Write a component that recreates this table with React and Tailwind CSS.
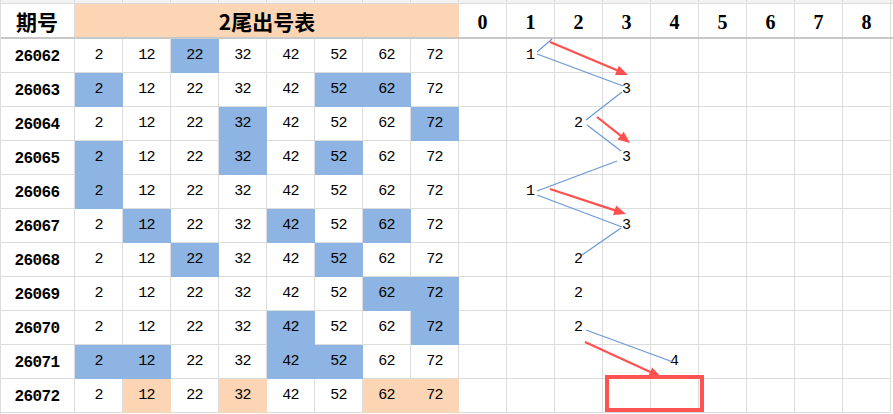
import React from "react";

const nums = [2, 12, 22, 32, 42, 52, 62, 72];

// period, highlighted indexes, count, fill
const rows = [
  { id: "26062", hit: [2], n: 1 },
  { id: "26063", hit: [0, 5, 6], n: 3 },
  { id: "26064", hit: [3, 7], n: 2 },
  { id: "26065", hit: [0, 3, 5], n: 3 },
  { id: "26066", hit: [0], n: 1 },
  { id: "26067", hit: [1, 4, 6], n: 3 },
  { id: "26068", hit: [2, 5], n: 2 },
  { id: "26069", hit: [6, 7], n: 2 },
  { id: "26070", hit: [4, 7], n: 2 },
  { id: "26071", hit: [0, 1, 4, 5], n: 4 },
  { id: "26072", hit: [1, 3, 6, 7], n: null, orange: true },
];

const mono = { fontFamily: '"Liberation Mono", "Noto Sans CJK SC", monospace' };

function Arrow({ x1, y1, x2, y2 }) {
  const dx = x2 - x1;
  const dy = y2 - y1;
  const len = Math.hypot(dx, dy);
  const ux = dx / len;
  const uy = dy / len;
  const hl = 12;
  const hw = 5;
  const bx = x2 - ux * hl;
  const by = y2 - uy * hl;
  const pts = `${x2},${y2} ${bx - uy * hw},${by + ux * hw} ${bx + uy * hw},${by - ux * hw}`;
  return (
    <g>
      <line x1={x1} y1={y1} x2={bx + ux * 2} y2={by + uy * 2} stroke="#ff5050" strokeWidth="2.2" />
      <polygon points={pts} fill="#ff5050" />
    </g>
  );
}

export default function App() {
  const blue = [
    [552, 39, 537, 52],
    [537, 54, 623, 86],
    [622, 92, 586, 120],
    [587, 125, 621, 151],
    [617, 161, 537, 191],
    [537, 195, 622, 227],
    [621, 228, 582, 255],
    [586, 330, 673, 362],
  ];

  return (
    <div className="relative w-[893px] h-[414px] overflow-hidden bg-white">
      {/* top strip of previous row */}
      <div className="grid grid-cols-[75px_repeat(17,48px)] h-[4px] bg-[#f2f2f2] border-b border-[#dcdcdc]">
        {Array.from({ length: 18 }).map((_, i) => (
          <div key={i} className="border-r border-[#dcdcdc]" />
        ))}
      </div>

      {/* header */}
      <div
        className="grid grid-cols-[75px_repeat(17,48px)] h-[35px] border-b-2 border-[#c8c8c8] font-bold text-black"
        style={{ fontFamily: '"Noto Sans CJK SC", "Liberation Serif", serif' }}
      >
        <div className="flex items-center justify-center border-r border-[#dcdcdc] pt-[2px] text-[21px] leading-none">
          期号
        </div>
        <div className="col-span-8 flex items-center justify-center bg-[#fcd5b4] pt-[2px] text-[21px] leading-none">
          2尾出号表
        </div>
        {Array.from({ length: 9 }).map((_, i) => (
          <div
            key={i}
            className="flex items-center justify-center border-r border-[#dcdcdc] pt-[3px] text-[20px] leading-none"
            style={{ fontFamily: '"Liberation Serif", serif' }}
          >
            {i}
          </div>
        ))}
      </div>

      {/* body */}
      {rows.map((r) => (
        <div key={r.id} className="grid grid-cols-[75px_repeat(17,48px)] h-[34px]" style={mono}>
          <div className="flex items-center justify-center border-r border-b border-[#dcdcdc] pt-[2px] text-[16px] font-bold tracking-[-0.6px] text-black">
            {r.id}
          </div>
          {nums.map((v, i) => {
            const on = r.hit.includes(i);
            const cls = on
              ? r.orange
                ? "bg-[#fcd5b4] border-[#fcd5b4]"
                : "bg-[#8db4e2] border-[#8db4e2]"
              : "border-[#dcdcdc]";
            return (
              <div
                key={i}
                className={`flex items-center justify-center border-r border-b pt-[2px] text-[15px] tracking-[-0.8px] text-black ${cls}`}
              >
                {v}
              </div>
            );
          })}
          {Array.from({ length: 9 }).map((_, i) => (
            <div
              key={i}
              className="flex items-center justify-center border-r border-b border-[#dcdcdc] pt-[2px] text-[15px] text-black"
            >
              {r.n === i ? i : ""}
            </div>
          ))}
        </div>
      ))}

      {/* left edge line */}
      <div className="absolute left-0 top-0 w-px h-full bg-[#dcdcdc]" />

      {/* trend lines */}
      <svg className="absolute left-0 top-0 pointer-events-none" width="893" height="414">
        {blue.map((b, i) => (
          <line key={i} x1={b[0]} y1={b[1]} x2={b[2]} y2={b[3]} stroke="#6b98d4" strokeWidth="1.2" />
        ))}
        <Arrow x1={550} y1={42} x2={628} y2={75} />
        <Arrow x1={597} y1={117} x2={630} y2={143} />
        <Arrow x1={550} y1={189} x2={626} y2={214} />
        <Arrow x1={585} y1={342} x2={661} y2={377} />
        <rect x="607" y="377" width="95" height="33" fill="none" stroke="#ff5252" strokeWidth="4" />
      </svg>
    </div>
  );
}
